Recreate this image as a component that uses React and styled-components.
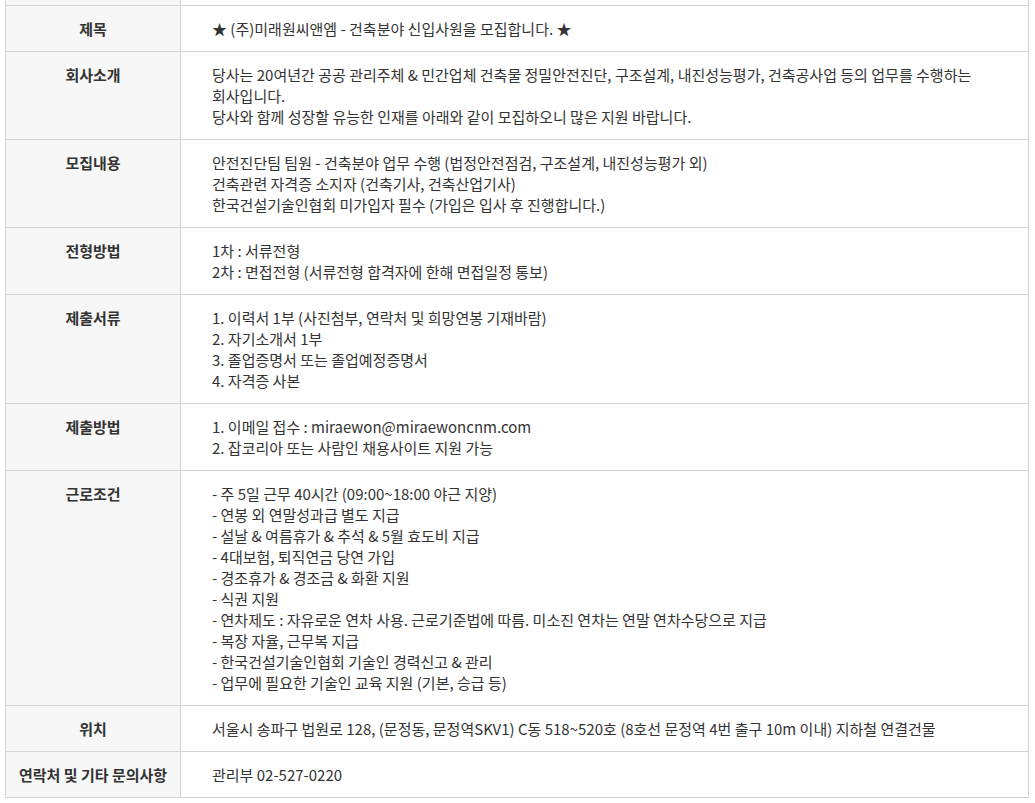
import React from 'react'
import styled, { createGlobalStyle } from 'styled-components'

const rows = [
  { label: '제목', lines: ['★ (주)미래원씨앤엠 - 건축분야 신입사원을 모집합니다. ★'] },
  {
    label: '회사소개',
    lines: [
      '당사는 20여년간 공공 관리주체 & 민간업체 건축물 정밀안전진단, 구조설계, 내진성능평가, 건축공사업 등의 업무를 수행하는',
      '회사입니다.',
      '당사와 함께 성장할 유능한 인재를 아래와 같이 모집하오니 많은 지원 바랍니다.',
    ],
  },
  {
    label: '모집내용',
    lines: [
      '안전진단팀 팀원 - 건축분야 업무 수행 (법정안전점검, 구조설계, 내진성능평가 외)',
      '건축관련 자격증 소지자 (건축기사, 건축산업기사)',
      '한국건설기술인협회 미가입자 필수 (가입은 입사 후 진행합니다.)',
    ],
  },
  {
    label: '전형방법',
    lines: ['1차 : 서류전형', '2차 : 면접전형 (서류전형 합격자에 한해 면접일정 통보)'],
  },
  {
    label: '제출서류',
    lines: [
      '1. 이력서 1부 (사진첨부, 연락처 및 희망연봉 기재바람)',
      '2. 자기소개서 1부',
      '3. 졸업증명서 또는 졸업예정증명서',
      '4. 자격증 사본',
    ],
  },
  {
    label: '제출방법',
    lines: ['1. 이메일 접수 : miraewon@miraewoncnm.com', '2. 잡코리아 또는 사람인 채용사이트 지원 가능'],
  },
  {
    label: '근로조건',
    lines: [
      '- 주 5일 근무 40시간 (09:00~18:00 야근 지양)',
      '- 연봉 외 연말성과급 별도 지급',
      '- 설날 & 여름휴가 & 추석 & 5월 효도비 지급',
      '- 4대보험, 퇴직연금 당연 가입',
      '- 경조휴가 & 경조금 & 화환 지원',
      '- 식권 지원',
      '- 연차제도 : 자유로운 연차 사용. 근로기준법에 따름. 미소진 연차는 연말 연차수당으로 지급',
      '- 복장 자율, 근무복 지급',
      '- 한국건설기술인협회 기술인 경력신고 & 관리',
      '- 업무에 필요한 기술인 교육 지원 (기본, 승급 등)',
    ],
  },
  {
    label: '위치',
    lines: ['서울시 송파구 법원로 128, (문정동, 문정역SKV1) C동 518~520호 (8호선 문정역 4번 출구 10m 이내) 지하철 연결건물'],
  },
  { label: '연락처 및 기타 문의사항', lines: ['관리부 02-527-0220'] },
]

function App() {
  return (
    <>
      <GlobalStyle />
      <Page>
        <Table>
          <Stub />
          <Stub $value />
          {rows.map((row) => (
            <React.Fragment key={row.label}>
              <Label>{row.label}</Label>
              <Value>
                {row.lines.map((line, i) => (
                  <Line key={i}>{line}</Line>
                ))}
              </Value>
            </React.Fragment>
          ))}
        </Table>
      </Page>
    </>
  )
}

const GlobalStyle = createGlobalStyle`
  html, body {
    margin: 0;
    padding: 0;
    background: #fff;
  }
  body {
    font-family: "Noto Sans CJK KR", "Noto Sans", sans-serif;
    color: #333;
  }
`

const Page = styled.div`
  padding: 0 6px 0 5px;
  width: 1035px;
  box-sizing: border-box;
`

const Table = styled.div`
  display: grid;
  grid-template-columns: 175px 1fr;
  width: 1024px;
  border-left: 1px solid #d4d4d4;
  border-right: 1px solid #d4d4d4;
  box-sizing: border-box;
`

const Stub = styled.div`
  height: 5px;
  background: ${(p) => (p.$value ? '#fff' : '#f7f7f7')};
  border-right: ${(p) => (p.$value ? 'none' : '1px solid #d4d4d4')};
`

const Label = styled.div`
  background: #f7f7f7;
  border-top: 1px solid #d4d4d4;
  border-right: 1px solid #d4d4d4;
  padding: 12px 4px;
  font-size: 15px;
  line-height: 21px;
  font-weight: 700;
  text-align: center;
  color: #333;
  &:nth-last-child(2) {
    border-bottom: 1px solid #d4d4d4;
  }
`

const Value = styled.div`
  border-top: 1px solid #d4d4d4;
  padding: 12px 20px 12px 31px;
  font-size: 15px;
  line-height: 21px;
  color: #333;
  &:last-child {
    border-bottom: 1px solid #d4d4d4;
  }
`

const Line = styled.div`
  white-space: pre-wrap;
`

export default App
